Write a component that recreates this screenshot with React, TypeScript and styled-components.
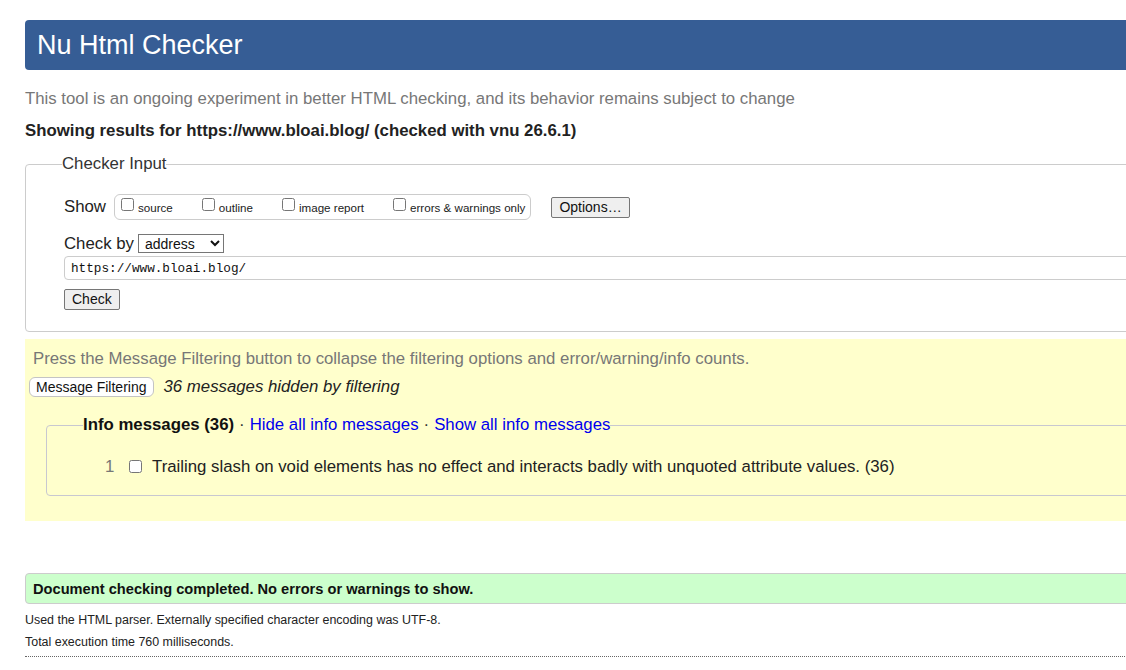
import React from "react";
import styled, { createGlobalStyle } from "styled-components";

const GlobalStyle = createGlobalStyle`
  html, body {
    margin: 0;
    padding: 0;
    overflow: hidden;
    background: #ffffff;
  }
  body {
    font-family: "Liberation Sans", Arial, sans-serif;
    color: #222;
  }
`;

const Page = styled.div`
  width: 1170px;
  padding: 20px 0 0 25px;
`;

const Header = styled.h1`
  margin: 0;
  height: 50px;
  display: flex;
  align-items: center;
  padding-left: 12px;
  background: #365d95;
  border-radius: 4px;
  color: #ffffff;
  font-size: 27px;
  font-weight: normal;
`;

const Intro = styled.p`
  margin: 20px 0 0;
  font-size: 16.8px;
  line-height: 18px;
  color: #777;
`;

const Showing = styled.p`
  margin: 14px 0 0;
  font-size: 16.8px;
  line-height: 18px;
  font-weight: bold;
  color: #222;
`;

const Fieldset = styled.fieldset<{ $tint?: string }>`
  margin: ${(p) => (p.$tint ? "19px 0 0 17px" : "15px 0 0")};
  padding: ${(p) => (p.$tint ? "24px 0 19px 36px" : "21px 0 21px 38px")};
  border: 1px solid ${(p) => p.$tint || "#cccccc"};
  border-radius: 4px;
  min-width: 0;
`;

const Legend = styled.legend<{ $strong?: boolean }>`
  padding: 0;
  margin-left: ${(p) => (p.$strong ? "0" : "-2px")};
  font-size: 16.8px;
  line-height: 18px;
  color: ${(p) => (p.$strong ? "#111" : "#333")};
  font-weight: ${(p) => (p.$strong ? "bold" : "normal")};
`;

const Row = styled.div<{ $gap?: number }>`
  display: flex;
  align-items: center;
  margin-top: ${(p) => p.$gap ?? 0}px;
`;

const FieldLabel = styled.span<{ $tight?: boolean }>`
  font-size: 16.8px;
  line-height: 18px;
  color: #222;
  margin-right: ${(p) => (p.$tight ? "4px" : "8px")};
`;

const CheckGroup = styled.div`
  display: flex;
  align-items: center;
  height: 24px;
  padding: 0 5px 0 6px;
  border: 1px solid #cccccc;
  border-radius: 6px;
  gap: 29px;
`;

const CheckItem = styled.label`
  display: flex;
  align-items: center;
  font-size: 11.6px;
  color: #222;
`;

const Box = styled.input.attrs({ type: "checkbox" })`
  width: 13px;
  height: 13px;
  margin: 0 4px 0 0;
  position: relative;
  top: -3px;
`;

const Button = styled.button<{ $soft?: boolean }>`
  font-family: "Liberation Sans", Arial, sans-serif;
  font-size: 14px;
  line-height: 15px;
  height: ${(p) => (p.$soft ? "20px" : "21px")};
  padding: 0 ${(p) => (p.$soft ? "6px" : "7px")};
  color: #111;
  background: ${(p) => (p.$soft ? "#ffffff" : "#efefef")};
  border: 1px solid ${(p) => (p.$soft ? "#c4c4c4" : "#767676")};
  border-radius: ${(p) => (p.$soft ? "6px" : "2px")};
`;

const OptionsButton = styled(Button)`
  margin-left: 20px;
`;

const Select = styled.select`
  font-family: "Liberation Sans", Arial, sans-serif;
  font-size: 14px;
  width: 86px;
  height: 19px;
  padding: 0 0 0 2px;
  border: 1px solid #767676;
  border-radius: 0;
  background: #fff;
  color: #111;
`;

const UrlInput = styled.input`
  display: block;
  box-sizing: border-box;
  width: 100%;
  height: 24px;
  margin-top: 3px;
  padding: 0 6px;
  font-family: "Liberation Mono", "DejaVu Sans Mono", monospace;
  font-size: 12.7px;
  color: #111;
  border: 1px solid #cccccc;
  border-radius: 4px;
`;

const CheckButton = styled(Button)`
  margin-top: 9px;
  display: block;
`;

const Filters = styled.section`
  margin-top: 7px;
  background: #ffffcc;
  padding: 11px 0 25px 4px;
`;

const FilterNote = styled.p`
  margin: 0 0 0 4px;
  font-size: 16.8px;
  line-height: 18px;
  color: #777;
`;

const HiddenNote = styled.em`
  margin-left: 10px;
  font-size: 16.8px;
  line-height: 18px;
  color: #222;
`;

const Dot = styled.span`
  font-weight: normal;
  color: #333;
  margin: 0 5px;
`;

const Link = styled.a`
  color: #0000ee;
  font-weight: normal;
  text-decoration: none;
`;

const MessageRow = styled.div`
  display: flex;
  align-items: center;
  padding-left: 22px;
  font-size: 16.8px;
  line-height: 18px;
  color: #222;
`;

const Num = styled.span`
  color: #777;
  width: 24px;
`;

const MsgBox = styled.input.attrs({ type: "checkbox" })`
  width: 13px;
  height: 13px;
  margin: 0 10px 0 0;
  position: relative;
  top: -1px;
`;

const Success = styled.div`
  margin-top: 52px;
  height: 29px;
  display: flex;
  align-items: center;
  padding-left: 7px;
  background: #ccffcc;
  border: 1px solid #cccccc;
  border-radius: 4px;
  font-size: 14.65px;
  font-weight: bold;
  color: #111;
`;

const Detail = styled.p<{ $first?: boolean }>`
  margin: ${(p) => (p.$first ? "9px" : "8px")} 0 0;
  font-size: 12.45px;
  line-height: 14px;
  color: #222;
`;

const Rule = styled.hr`
  margin: 7px 0 0;
  border: 0;
  border-top: 1px dotted #666;
`;

export default function App() {
  return (
    <>
      <GlobalStyle />
      <Page>
        <Header>Nu Html Checker</Header>
        <Intro>
          This tool is an ongoing experiment in better HTML checking, and its behavior remains subject to change
        </Intro>
        <Showing>Showing results for https://www.bloai.blog/ (checked with vnu 26.6.1)</Showing>

        <Fieldset>
          <Legend>Checker Input</Legend>
          <Row>
            <FieldLabel>Show</FieldLabel>
            <CheckGroup>
              <CheckItem><Box />source</CheckItem>
              <CheckItem><Box />outline</CheckItem>
              <CheckItem><Box />image report</CheckItem>
              <CheckItem><Box />errors &amp; warnings only</CheckItem>
            </CheckGroup>
            <OptionsButton>Options…</OptionsButton>
          </Row>
          <Row $gap={14}>
            <FieldLabel $tight>Check by</FieldLabel>
            <Select defaultValue="address">
              <option value="address">address</option>
              <option value="file">file upload</option>
              <option value="text">text input</option>
            </Select>
          </Row>
          <UrlInput defaultValue="https://www.bloai.blog/" />
          <CheckButton>Check</CheckButton>
        </Fieldset>

        <Filters>
          <FilterNote>
            Press the Message Filtering button to collapse the filtering options and error/warning/info counts.
          </FilterNote>
          <Row $gap={9}>
            <Button $soft>Message Filtering</Button>
            <HiddenNote>36 messages hidden by filtering</HiddenNote>
          </Row>
          <Fieldset $tint="#c8c8d0">
            <Legend $strong>
              Info messages (36)
              <Dot>·</Dot>
              <Link href="#">Hide all info messages</Link>
              <Dot>·</Dot>
              <Link href="#">Show all info messages</Link>
            </Legend>
            <MessageRow>
              <Num>1</Num>
              <MsgBox />
              Trailing slash on void elements has no effect and interacts badly with unquoted attribute values. (36)
            </MessageRow>
          </Fieldset>
        </Filters>

        <Success>Document checking completed. No errors or warnings to show.</Success>
        <Detail $first>Used the HTML parser. Externally specified character encoding was UTF-8.</Detail>
        <Detail>Total execution time 760 milliseconds.</Detail>
        <Rule />
      </Page>
    </>
  );
}
